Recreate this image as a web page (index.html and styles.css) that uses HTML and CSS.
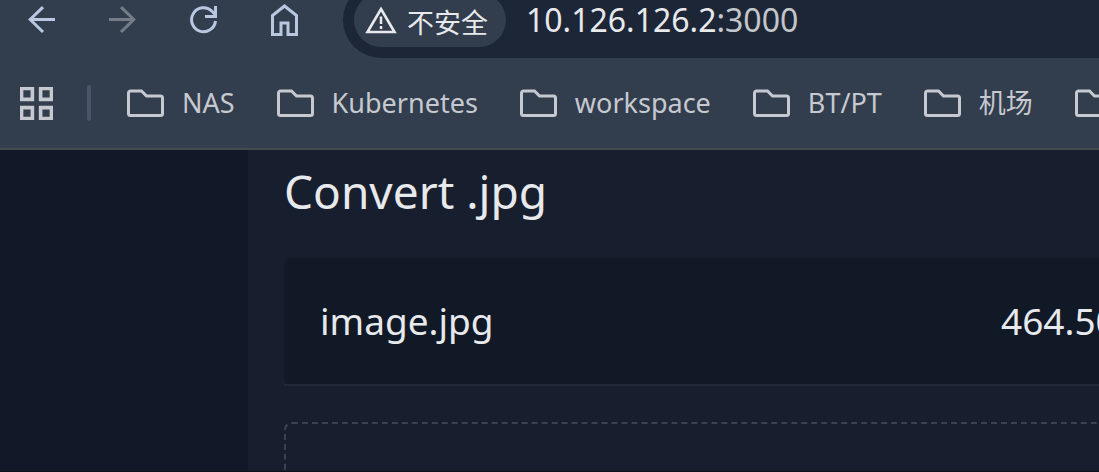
FILE: index.html
```html
<!DOCTYPE html>
<html lang="zh-CN">
<head>
<meta charset="utf-8">
<title>Convert .jpg</title>
<link rel="stylesheet" href="styles.css">
</head>
<body>
<svg class="symbols" aria-hidden="true">
  <symbol id="folder" viewBox="0 0 38 28">
    <path d="M3.500 2h11l5 5h14a2 2 0 0 1 2 2v15.500a2 2 0 0 1-2 2h-30a2 2 0 0 1-2-2V4a2 2 0 0 1 2-2z" fill="none" stroke="currentColor" stroke-width="3"/>
  </symbol>
</svg>
<header class="browser">
  <div class="toolbar">
    <nav class="nav" aria-label="Navigation">
      <button class="nav-button" type="button" aria-label="Back">
        <svg class="nav-icon" viewBox="0 0 28 28"><path d="M28 13.500H3M16 1.200L3.200 13.500 16 26"/></svg>
      </button>
      <button class="nav-button nav-disabled" type="button" aria-label="Forward" disabled>
        <svg class="nav-icon" viewBox="0 0 28 28"><path d="M1 13.500H26M13 1.200L25.800 13.500 13 26"/></svg>
      </button>
      <button class="nav-button" type="button" aria-label="Reload">
        <svg class="nav-icon" viewBox="0 0 28 28"><path d="M26.500 15A12 12 0 1 1 23 5.200L26.500 9M26.500 0V10.500H16"/></svg>
      </button>
      <button class="nav-button" type="button" aria-label="Home">
        <svg class="nav-icon home" viewBox="0 0 28 32"><path d="M2.500 11.500L14.500 2l12 9.500v19h-8.500V19h-7v11.500H2.500z"/></svg>
      </button>
    </nav>
    <div class="address">
      <button class="security" type="button">
        <svg class="warning" viewBox="0 0 32 28"><path d="M16 3L29.500 26h-27z" fill="none" stroke="currentColor" stroke-width="2.600"/><path d="M16 10.500v7.500M16 20v3" stroke="currentColor" stroke-width="2.500"/></svg>
        <span>不安全</span>
      </button>
      <div class="url">10.126.126.2<span class="port">:3000</span></div>
    </div>
  </div>
  <nav class="bookmarks" aria-label="Bookmarks">
    <button class="apps" type="button" aria-label="Apps">
      <svg class="apps-icon" viewBox="0 0 32 32"><path d="M1.500 1.500h10.500v10.500H1.500zM20 1.500h10.500v10.500H20zM1.500 20h10.500v10.500H1.500zM20 20h10.500v10.500H20z" fill="none" stroke="currentColor" stroke-width="3.500"/></svg>
    </button>
    <span class="divider"></span>
    <button class="bookmark" type="button"><svg class="folder"><use href="#folder"/></svg>NAS</button>
    <button class="bookmark" type="button"><svg class="folder"><use href="#folder"/></svg>Kubernetes</button>
    <button class="bookmark" type="button"><svg class="folder"><use href="#folder"/></svg>workspace</button>
    <button class="bookmark" type="button"><svg class="folder"><use href="#folder"/></svg>BT/PT</button>
    <button class="bookmark" type="button"><svg class="folder"><use href="#folder"/></svg>机场</button>
    <button class="bookmark" type="button" aria-label="Bookmark folder"><svg class="folder"><use href="#folder"/></svg></button>
  </nav>
</header>
<main class="page">
  <section class="panel">
    <h1 class="title">Convert .jpg</h1>
    <table class="files">
      <tbody>
        <tr><td class="file-name">image.jpg</td><td class="file-size">464.50</td></tr>
      </tbody>
    </table>
    <div class="dropzone"></div>
  </section>
</main>
</body>
</html>
```
FILE: styles.css
```css
* {
  box-sizing: border-box;
}

body {
  margin: 0;
  display: flex;
  flex-direction: column;
  height: 100vh;
  overflow: hidden;
  background: #111827;
  border-bottom: 1px solid #0d121d;
  color: #e8e9ec;
  font-family: "Noto Sans", "Noto Sans CJK SC", sans-serif;
}

button {
  padding: 0;
  border: 0;
  background: none;
  color: inherit;
  font: inherit;
}

svg {
  display: block;
  flex-shrink: 0;
}

.symbols {
  position: absolute;
  width: 0;
  height: 0;
}

.browser {
  flex-shrink: 0;
  background: #323d4d;
  border-bottom: 2px solid #444a50;
}

.toolbar {
  display: flex;
  height: 58px;
}

.nav {
  display: flex;
  gap: 53px;
  padding: 0 45px 18px 27px;
  align-items: center;
  flex-shrink: 0;
}

.nav-button {
  color: #b9c7e0;
}

.nav-disabled {
  color: #747c88;
}

.nav-icon {
  width: 28px;
  height: 28px;
  fill: none;
  stroke: currentColor;
  stroke-width: 3;
}

.home {
  height: 32px;
}

.address {
  flex: 1;
  display: flex;
  align-items: center;
  gap: 20px;
  height: 76px;
  margin-top: -18px;
  padding-left: 11px;
  background: #1d2636;
  border-radius: 38px 0 0 38px;
}

.security {
  display: flex;
  align-items: center;
  gap: 10px;
  height: 54px;
  padding: 0 18px 0 11px;
  border-radius: 27px;
  background: #323d4d;
  font-size: 27px;
  line-height: 40px;
  white-space: nowrap;
}

.security span {
  padding-top: 6px;
}

.warning {
  width: 32px;
  height: 28px;
}

.url {
  font-size: 32px;
  line-height: 40px;
}

.port {
  color: #c3c6cb;
}

.bookmarks {
  display: flex;
  align-items: center;
  gap: 42px;
  height: 90px;
  padding-left: 20px;
  color: #c7c9d0;
  font-size: 27px;
  line-height: 36px;
  white-space: nowrap;
}

.apps-icon {
  width: 33px;
  height: 33px;
}

.divider {
  flex-shrink: 0;
  width: 4px;
  height: 36px;
  margin: 0 -6px 0 -8px;
  border-radius: 2px;
  background: #495566;
}

.bookmark {
  display: flex;
  flex-shrink: 0;
  align-items: center;
  gap: 17px;
}

.folder {
  width: 38px;
  height: 28px;
}

.page {
  flex: 1;
  min-height: 0;
  padding-left: 248px;
}

.panel {
  height: 100%;
  padding: 11px 0 0 36px;
  background: #171e2d;
  overflow: hidden;
}

.title {
  margin: 0 0 37px;
  font-size: 46px;
  font-weight: 400;
  line-height: 60px;
}

.files {
  width: 100%;
  border-spacing: 0;
  border-radius: 8px 0 0 8px;
  background: #111826;
  font-size: 37px;
  line-height: 54px;
}

.files td {
  padding: 36px 0;
  border-bottom: 2px solid #212938;
  white-space: nowrap;
}

.files .file-name {
  padding-left: 36px;
}

.files .file-size {
  width: 98px;
  max-width: 98px;
}

.dropzone {
  height: 240px;
  margin-top: 36px;
  border: 2px dashed #384251;
  border-right: 0;
  border-radius: 8px 0 0 8px;
}
```
